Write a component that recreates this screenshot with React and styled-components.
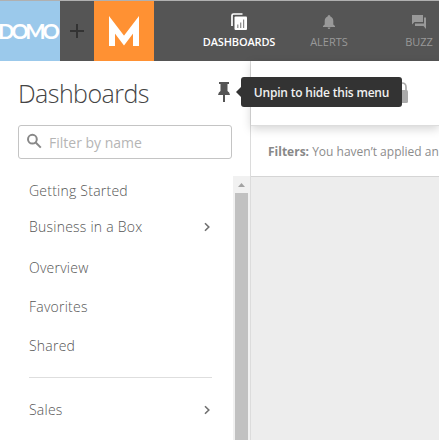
import React from 'react';
import styled, { createGlobalStyle } from 'styled-components';

const GlobalStyle = createGlobalStyle`
  * { box-sizing: border-box; }
  body { margin: 0; overflow: hidden; background: #fff; font-family: 'Open Sans', sans-serif; }
`;

const Page = styled.div`
  width: 439px;
  height: 440px;
  display: flex;
  flex-direction: column;
  overflow: hidden;
`;

const Header = styled.header`
  flex: 0 0 61px;
  display: flex;
  background: #555;
  border-top: 1px solid #b0b0b0;
`;

const BrandTile = styled.div`
  width: 60px;
  height: 60px;
  flex: none;
  background: ${(p) => p.$color};
  svg { display: block; }
`;

const AddButton = styled.div`
  flex: 0 0 34px;
  display: flex;
  align-items: center;
  justify-content: center;
`;

const Nav = styled.nav`
  display: flex;
  margin-left: 40px;
`;

const NavItem = styled.div`
  flex: none;
  width: 90px;
  display: flex;
  flex-direction: column;
  align-items: center;
  padding-top: 12px;
  color: ${(p) => (p.$active ? '#fff' : '#999')};
  font-size: 11px;
  line-height: 16px;
  font-weight: ${(p) => (p.$active ? 600 : 400)};
  letter-spacing: ${(p) => (p.$active ? '-0.15px' : '0')};
  svg { display: block; margin-bottom: 4px; }
`;

const Body = styled.div`
  flex: 1;
  min-height: 0;
  display: flex;
`;

const Sidebar = styled.aside`
  flex: 0 0 251px;
  display: flex;
  flex-direction: column;
  border-right: 1px solid #dcdcdc;
`;

const TitleRow = styled.div`
  height: 64px;
  flex: none;
  display: flex;
  align-items: center;
  justify-content: space-between;
  padding: 0 20px 0 18px;
`;

const Title = styled.h1`
  margin: 0;
  font-size: 25px;
  line-height: 34px;
  font-weight: 300;
  color: #444;
  letter-spacing: -0.55px;
`;

const PinAnchor = styled.div`
  position: relative;
  width: 12px;
  height: 20px;
  margin-top: -3px;
  svg { display: block; }
`;

const Tooltip = styled.div`
  position: absolute;
  z-index: 5;
  left: 23px;
  top: -5px;
  width: 161px;
  height: 30px;
  border-radius: 3px;
  background: #333;
  color: #f0f0f0;
  font-size: 12px;
  font-weight: 600;
  letter-spacing: -0.2px;
  line-height: 31px;
  text-align: center;
  white-space: nowrap;
  &::before {
    content: '';
    position: absolute;
    left: -5px;
    top: 10px;
    border: 5px solid transparent;
    border-left: 0;
    border-right-color: #333;
  }
`;

const SearchBox = styled.div`
  flex: none;
  width: 214px;
  height: 34px;
  margin-left: 18px;
  display: flex;
  align-items: center;
  border: 1px solid #c4c4c4;
  border-radius: 3px;
  padding-left: 7px;
  color: #b5b5b5;
  font-size: 14px;
  svg { margin: -2px 7px 0 0; }
`;

const MenuArea = styled.div`
  flex: 1;
  min-height: 0;
  margin-top: 17px;
  display: flex;
`;

const Menu = styled.div`
  flex: 1;
  padding: 0 21px 0 29px;
`;

const MenuItem = styled.div`
  height: 20px;
  margin-top: ${(p) => p.$gap}px;
  display: flex;
  align-items: center;
  justify-content: space-between;
  padding-right: 1px;
  font-size: 14px;
  line-height: 20px;
  font-weight: 300;
  letter-spacing: 0.23px;
  color: #555;
`;

const Divider = styled.div`
  height: 1px;
  margin-top: 21px;
  background: #dedede;
`;

const Scrollbar = styled.div`
  flex: 0 0 17px;
  display: flex;
  flex-direction: column;
  align-items: center;
  background: #f1f1f1;
  padding: 0 2px;
  svg { flex: none; display: block; }
`;

const Thumb = styled.div`
  flex: 1;
  width: 13px;
  background: #c1c1c1;
`;

const Main = styled.main`
  flex: 1;
  min-width: 0;
  display: flex;
  flex-direction: column;
  background: #ededed;
`;

const PageBar = styled.div`
  flex: 0 0 65px;
  position: relative;
  background: #fff;
  border-bottom: 1px solid #ddd;
  box-shadow: 0 3px 9px rgba(0, 0, 0, 0.17);
  padding: 21px 0 0 144px;
  svg { display: block; }
`;

const FilterBar = styled.div`
  flex: 0 0 51px;
  background: #fff;
  border-bottom: 1px solid #d5d5d5;
  padding: 17px 0 0 17px;
  font-size: 12px;
  line-height: 17px;
  white-space: nowrap;
  color: #8c8c8c;
  b { font-weight: 700; color: #888; }
`;

const Chevron = () => (
  <svg width="8" height="10" viewBox="0 0 8 10" fill="none" stroke="#707070" strokeWidth="1.6">
    <path d="M2 1.2 L5.8 5 L2 8.8" />
  </svg>
);

export default function App() {
  return (
    <Page>
      <GlobalStyle />
      <Header>
        <BrandTile $color="#9bc9eb">
          <svg width="60" height="60">
            <text x="-2" y="37.5" fill="#fff" fontFamily="Lato, sans-serif" fontSize="21.5" fontWeight="700" letterSpacing="-3.2">DOMO</text>
          </svg>
        </BrandTile>
        <AddButton>
          <svg width="14" height="14" stroke="#333" strokeWidth="2">
            <path d="M0 7H14M7 0V14" />
          </svg>
        </AddButton>
        <BrandTile $color="#ff9133">
          <svg width="60" height="60">
            <polyline points="18,45 18,23.8 30,39.5 42,23.8 42,45" fill="none" stroke="#fff" strokeWidth="6" strokeMiterlimit="10" />
          </svg>
        </BrandTile>
        <Nav>
          <NavItem $active>
            <svg width="16" height="17" viewBox="0 0 16 17">
              <path d="M11.5 1H2.5Q1 1 1 2.5V13" fill="none" stroke="#fff" strokeWidth="1.7" />
              <rect x="3.5" y="3.5" width="12.5" height="13.5" rx="1" fill="#fff" />
              <path d="M6.8 15V11.5M9.7 15V9.5M12.6 15V6.5" stroke="#888" strokeWidth="1.2" />
            </svg>
            DASHBOARDS
          </NavItem>
          <NavItem>
            <svg width="18" height="17" viewBox="0 0 18 17" fill="currentColor">
              <path d="M9 2Q10.4 2 10.4 3.5Q13.3 4.5 13.3 8V11.5L15 13V14H3V13L4.7 11.5V8Q4.7 4.5 7.6 3.5Q7.6 2 9 2ZM7.6 14.5H10.4Q10.2 16 9 16Q7.8 16 7.6 14.5Z" />
            </svg>
            ALERTS
          </NavItem>
          <NavItem>
            <svg width="14" height="17" viewBox="0 0 14 17" fill="currentColor">
              <path d="M0 2H11V9H2.5L0 11.5ZM12 4.5H14V16L11.5 13H3V10.5H12Z" />
            </svg>
            BUZZ
          </NavItem>
        </Nav>
      </Header>
      <Body>
        <Sidebar>
          <TitleRow>
            <Title>Dashboards</Title>
            <PinAnchor>
              <svg width="12" height="20" viewBox="0 0 12 20" fill="#555">
                <path d="M1 0H11V2H9.5V9Q11.5 10 12 13H0Q.5 10 2.5 9V2H1ZM5 13H7V20H5Z" />
              </svg>
              <Tooltip>Unpin to hide this menu</Tooltip>
            </PinAnchor>
          </TitleRow>
          <SearchBox>
            <svg width="16" height="16" viewBox="0 0 16 16" fill="none" stroke="#888" strokeWidth="2">
              <circle cx="6.4" cy="6.2" r="4.4" />
              <path d="M9.7 9.5L14.8 14.6" />
            </svg>
            Filter by name
          </SearchBox>
          <MenuArea>
            <Menu>
              <MenuItem $gap={5}>Getting Started</MenuItem>
              <MenuItem $gap={16}>Business in a Box<Chevron /></MenuItem>
              <MenuItem $gap={21}>Overview</MenuItem>
              <MenuItem $gap={19}>Favorites</MenuItem>
              <MenuItem $gap={19}>Shared</MenuItem>
              <Divider />
              <MenuItem $gap={22}>Sales<Chevron /></MenuItem>
            </Menu>
            <Scrollbar>
              <svg width="13" height="17">
                <path d="M3 11L6.5 7L10 11Z" fill="#a3a3a3" />
              </svg>
              <Thumb />
            </Scrollbar>
          </MenuArea>
        </Sidebar>
        <Main>
          <PageBar>
            <svg width="14" height="21" viewBox="0 0 14 21">
              <path d="M3 9V5Q3 1 7 1T11 5V9" fill="none" stroke="#aaa" strokeWidth="1.7" />
              <rect y="8" width="13" height="13" rx="1.5" fill="#aaa" />
            </svg>
          </PageBar>
          <FilterBar><b>Filters:</b> You haven’t applied an</FilterBar>
        </Main>
      </Body>
    </Page>
  );
}
